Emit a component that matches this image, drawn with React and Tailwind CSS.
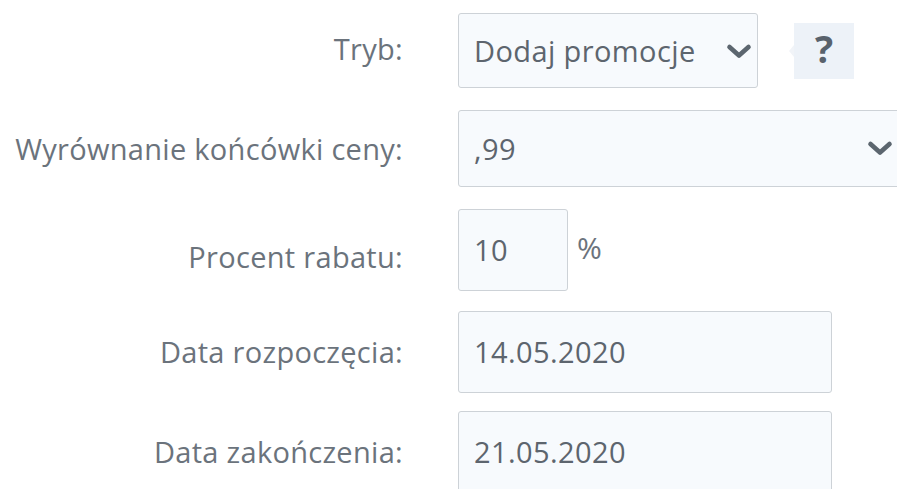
const font = { fontFamily: '"Open Sans", "Noto Sans", sans-serif' };

function Chevron({ className = "" }) {
    return (
        <svg viewBox="0 0 26 17" className={`w-[26px] h-[17px] ${className}`} fill="none">
            <path d="M3.5 4 L13 12.5 L22.5 4" stroke="#5c666f" strokeWidth="4.6" strokeLinecap="round" strokeLinejoin="round" />
        </svg>
    );
}

function Label({ children, className = "" }) {
    return (
        <div className={`flex items-center justify-end text-[29px] text-[#6b737c] tracking-[0.3px] ${className}`}>
            {children}
        </div>
    );
}

function Box({ children, className = "" }) {
    return (
        <div className={`flex items-center border border-[#cdd2d7] rounded-[3px] bg-[#f7fafd] pl-[15px] text-[29px] text-[#5d656e] tracking-[0.4px] ${className}`}>
            {children}
        </div>
    );
}

export default function App() {
    return (
        <div style={font} className="w-[897px] h-[489px] bg-white overflow-hidden">
            <div className="grid grid-cols-[403px_1fr] gap-x-[55px] pt-[13px]">
                <Label className="h-[75px] pb-[4px]">Tryb:</Label>
                <div className="flex items-center">
                    <Box className="w-[300px] h-[75px] justify-between pr-[5px]">
                        <span>Dodaj promocje</span>
                        <Chevron className="mt-[2px]" />
                    </Box>
                    <div className="relative ml-[36px] w-[60px] h-[56px] bg-[#edf2f8] flex items-center justify-center text-[38px] font-bold text-[#59626c] pb-[4px]">
                        <span className="absolute left-[-5px] top-[22px] w-0 h-0 border-y-[6px] border-y-transparent border-r-[5px] border-r-[#f1f4f8]" />
                        ?
                    </div>
                </div>

                <Label className="h-[77px] mt-[22px]">Wyrównanie końcówki ceny:</Label>
                <Box className="h-[77px] mt-[22px] pl-[9px] pr-[13px] justify-between -mr-[10px]">
                    <span>,99</span>
                    <Chevron />
                </Box>

                <Label className="h-[82px] mt-[22px] pt-[14px]">Procent rabatu:</Label>
                <div className="flex items-start mt-[22px]">
                    <Box className="w-[110px] h-[82px]">10</Box>
                    <span className="ml-[9px] mt-[16px] text-[30px] text-[#6b737c]">%</span>
                </div>

                <Label className="h-[82px] mt-[20px]">Data rozpoczęcia:</Label>
                <Box className="w-[374px] h-[82px] mt-[20px]">14.05.2020</Box>

                <Label className="h-[82px] mt-[18px]">Data zakończenia:</Label>
                <Box className="w-[374px] h-[82px] mt-[18px]">21.05.2020</Box>
            </div>
        </div>
    );
}
